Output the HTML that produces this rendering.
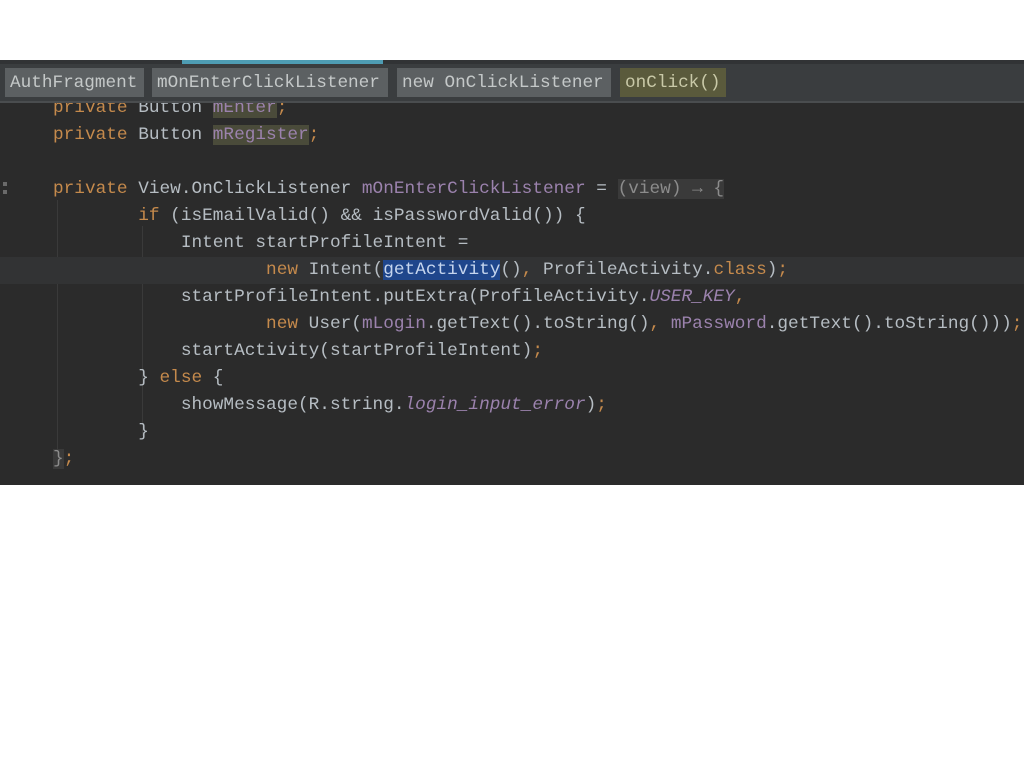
<!DOCTYPE html>
<html><head><meta charset="utf-8"><style>
html,body{margin:0;padding:0;width:1024px;height:767px;background:#fff;overflow:hidden}
#ed{position:absolute;left:0;top:60px;width:1024px;height:425px;background:#2b2b2b;overflow:hidden}
#strip{position:absolute;left:0;top:0;width:1024px;height:5px;background:#313335}
#cy{position:absolute;left:182px;top:0;width:201px;height:4px;background:#4e9cb3}
#bc{position:absolute;left:0;top:4px;width:1024px;height:37px;background:#3a3d3f;border-bottom:2px solid #4a4d4f;z-index:2}
.t{position:absolute;top:4px;height:29px;line-height:19px;padding-top:5px;background:#5c6062;color:#c4c8c8;font:17.7px "Liberation Mono",monospace;padding-left:5px;box-sizing:border-box}
.code{position:absolute;left:0;top:35px;width:1024px;font:17.75px "Liberation Mono",monospace;color:#b6bdc3}
.l{height:27px;line-height:27px;padding-left:53px;position:relative;white-space:pre}
.k{color:#c58a4c}.f{color:#9b82ad}.i{font-style:italic}
.cur{background:#323334}
.sel{background:#1f468c;color:#c5d5ee}
.hl{background:#4a4b3a}
.lam{background:#3a3a3a;color:#8c8c8c}
.guide{position:absolute;width:1px;background:#3a3a3a}
</style></head><body>
<div id="ed">
<div id="strip"><div id="cy"></div></div>
<div class="guide" style="left:57px;top:140px;height:262px"></div>
<div class="guide" style="left:142px;top:166px;height:210px"></div>
<div style="position:absolute;left:3px;top:122px;width:4px;height:4px;background:#6a6a6a"></div>
<div style="position:absolute;left:3px;top:130px;width:4px;height:4px;background:#6a6a6a"></div>
<div class="code"><div class="l"><span class="k">private</span> Button <span class="f hl">mEnter</span><span class="k">;</span></div><div class="l"><span class="k">private</span> Button <span class="f hl">mRegister</span><span class="k">;</span></div><div class="l"> </div><div class="l"><span class="k">private</span> View.OnClickListener <span class="f">mOnEnterClickListener</span> = <span class="lam">(view) → {</span></div><div class="l">        <span class="k">if</span> (isEmailValid() &amp;&amp; isPasswordValid()) {</div><div class="l">            Intent startProfileIntent =</div><div class="l cur">                    <span class="k">new</span> Intent(<span class="sel">getActivity</span>()<span class="k">,</span> ProfileActivity.<span class="k">class</span>)<span class="k">;</span></div><div class="l">            startProfileIntent.putExtra(ProfileActivity.<span class="f i">USER_KEY</span><span class="k">,</span></div><div class="l">                    <span class="k">new</span> User(<span class="f">mLogin</span>.getText().toString()<span class="k">,</span> <span class="f">mPassword</span>.getText().toString()))<span class="k">;</span></div><div class="l">            startActivity(startProfileIntent)<span class="k">;</span></div><div class="l">        } <span class="k">else</span> {</div><div class="l">            showMessage(R.string.<span class="f i">login_input_error</span>)<span class="k">;</span></div><div class="l">        }</div><div class="l"><span class="lam">}</span><span class="k">;</span></div></div>
<div id="bc">
<div class="t" style="left:5px;width:139px">AuthFragment</div>
<div class="t" style="left:152px;width:236px">mOnEnterClickListener</div>
<div class="t" style="left:397px;width:214px">new OnClickListener</div>
<div class="t" style="left:620px;width:106px;background:#5a5a3c;color:#c9c9a8">onClick()</div>
</div>
</div>
</body></html>
